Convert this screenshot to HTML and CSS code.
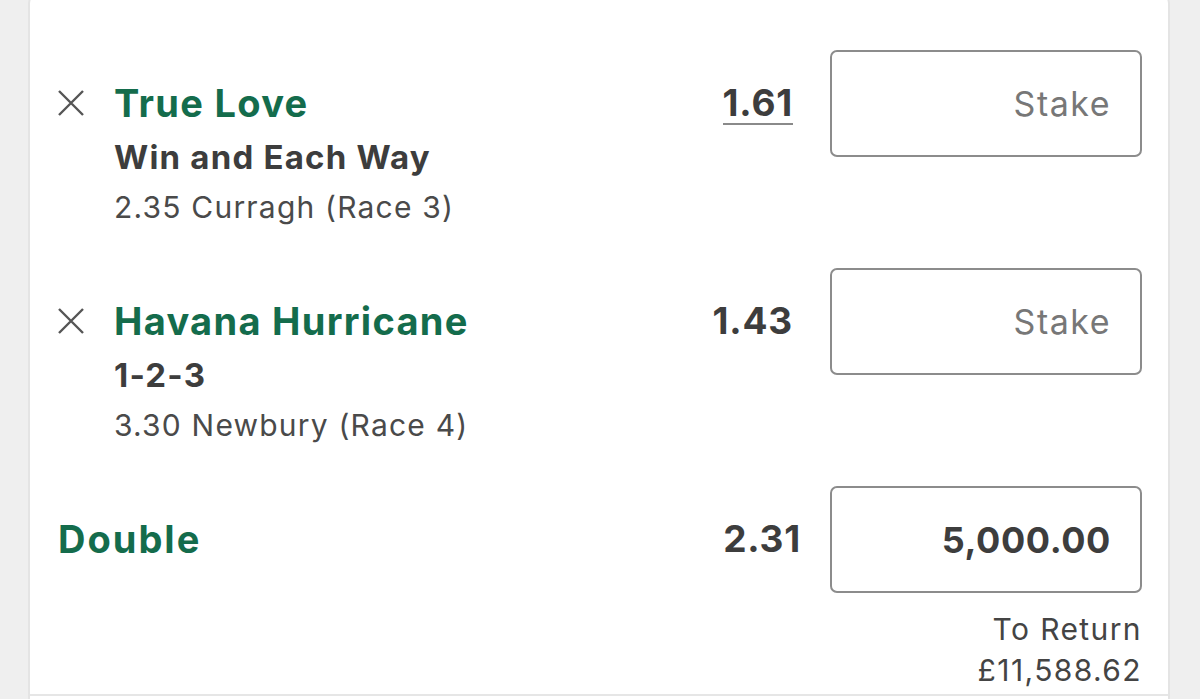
FILE: index.html
```html
<!DOCTYPE html>
<html lang="en">
<head>
  <meta charset="UTF-8" />
  <title>Bet Slip</title>
  <link rel="stylesheet" href="styles.css">
</head>
<body>
  <div class="slip">

    <!-- Selection 1 -->
    <div class="bet">
      <div class="remove">
        <svg viewBox="0 0 26 26" width="26" height="26"><path d="M1 1 L25 25 M25 1 L1 25" stroke="#555" stroke-width="2.4" fill="none"/></svg>
      </div>
      <div class="info">
        <div class="name">True Love</div>
        <div class="market">Win and Each Way</div>
        <div class="race">2.35 Curragh (Race 3)</div>
      </div>
      <div class="odds"><span class="boosted">1.61</span></div>
      <div class="stake placeholder">Stake</div>
    </div>

    <!-- Selection 2 -->
    <div class="bet">
      <div class="remove">
        <svg viewBox="0 0 26 26" width="26" height="26"><path d="M1 1 L25 25 M25 1 L1 25" stroke="#555" stroke-width="2.4" fill="none"/></svg>
      </div>
      <div class="info">
        <div class="name">Havana Hurricane</div>
        <div class="market">1-2-3</div>
        <div class="race">3.30 Newbury (Race 4)</div>
      </div>
      <div class="odds"><span>1.43</span></div>
      <div class="stake placeholder">Stake</div>
    </div>

    <!-- Multiple -->
    <div class="bet multiple">
      <div class="info">
        <div class="name">Double</div>
      </div>
      <div class="odds"><span>2.31</span></div>
      <div class="stake filled">5,000.00</div>
    </div>

    <div class="returns">
      <div>To Return</div>
      <div>£11,588.62</div>
    </div>

    <div class="divider"></div>
  </div>
</body>
</html>
```

FILE: styles.css
```css
html, body {
  margin: 0;
  padding: 0;
  background: #efefef;
  font-family: Inter, "Noto Sans", Arial, sans-serif;
  overflow: hidden;
}

.slip {
  box-sizing: border-box;
  margin: -10px 30px 0 28px;
  background: #fff;
  border: 2px solid #e4e4e4;
  border-bottom: none;
  border-radius: 14px 14px 0 0;
  padding-top: 58px;
  height: 709px;
}

.bet {
  display: flex;
  align-items: flex-start;
  padding: 0 26px 0 28px;
  height: 218px;
}

.remove {
  width: 26px;
  height: 26px;
  margin-top: 40px;
  margin-right: 30px;
}

.remove svg {
  display: block;
}

.info {
  flex: 1;
  margin-top: 28px;
}

.name {
  color: #146c4c;
  font-weight: 700;
  font-size: 38px;
  letter-spacing: 1.3px;
  line-height: 50px;
}

.market {
  margin-top: 3px;
  color: #3d3d3d;
  font-weight: 700;
  font-size: 33px;
  letter-spacing: 1.2px;
  line-height: 52px;
}

.race {
  color: #4a4a4a;
  font-size: 30px;
  letter-spacing: 1.2px;
  line-height: 48px;
}

.odds {
  margin-top: 28px;
  margin-right: 37px;
  color: #3d3d3d;
  font-weight: 700;
  font-size: 37px;
  letter-spacing: 0.8px;
  line-height: 50px;
}

.odds .boosted {
  display: inline-block;
  line-height: 40px;
  margin-top: 4px;
  border-bottom: 2px solid #8a8a8a;
}

.stake {
  box-sizing: border-box;
  width: 312px;
  height: 107px;
  border: 2px solid #8c8c8c;
  border-radius: 7px;
  padding-right: 29px;
  display: flex;
  align-items: center;
  justify-content: flex-end;
  font-size: 34px;
  letter-spacing: 1.5px;
}

.stake.placeholder {
  color: #777;
}

.stake.filled {
  color: #3d3d3d;
  font-weight: 700;
  font-size: 36px;
  letter-spacing: 0.6px;
}

.multiple {
  height: 107px;
}

.multiple .name {
  font-size: 38px;
  letter-spacing: 2px;
}

.multiple .odds {
  margin-right: 29px;
}

.returns {
  text-align: right;
  padding-right: 26px;
  margin-top: 16px;
  color: #444;
  font-size: 30px;
  letter-spacing: 1.4px;
  line-height: 41px;
}

.divider {
  margin-top: 3px;
  border-top: 2px solid #e6e6e6;
}
```
